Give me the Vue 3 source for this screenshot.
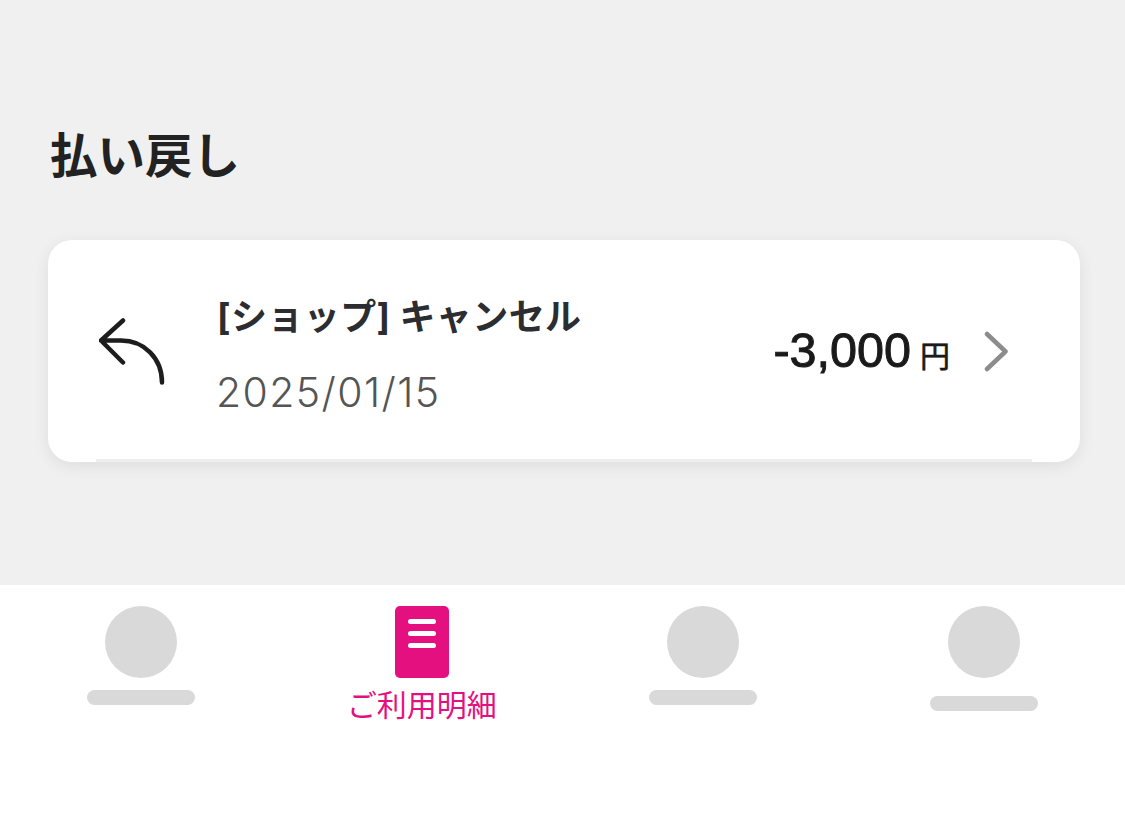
<template>
  <div class="page">
    <main class="content">
      <h1 class="heading">払い戻し</h1>
      <section class="card">
        <div class="row">
          <svg class="back-icon" width="72" height="72" viewBox="0 0 72 72" fill="none">
            <path d="M24 6.5 L2 26.5 L24 48.5 M2 26.5 H22 C45 26.5 63 44 63 68.5" stroke="#1d1d1d" stroke-width="4.5" stroke-linecap="round" stroke-linejoin="round" />
          </svg>
          <div class="info">
            <div class="title">[ショップ] キャンセル</div>
            <div class="date">2025/01/15</div>
          </div>
          <div class="amount">-3,000<span class="unit">円</span></div>
          <svg class="chevron" width="26" height="44" viewBox="0 0 26 44" fill="none">
            <path d="M5 6 L23.5 23.5 L5 41" stroke="#8c8c8c" stroke-width="4.5" stroke-linecap="round" stroke-linejoin="round" />
          </svg>
        </div>
      </section>
    </main>
    <nav class="nav">
      <div class="nav-item">
        <div class="circle"></div>
        <div class="bar"></div>
      </div>
      <div class="nav-item active">
        <div class="doc">
          <span></span>
          <span></span>
          <span></span>
        </div>
        <div class="label">ご利用明細</div>
      </div>
      <div class="nav-item">
        <div class="circle"></div>
        <div class="bar"></div>
      </div>
      <div class="nav-item">
        <div class="circle"></div>
        <div class="bar low"></div>
      </div>
    </nav>
  </div>
</template>

<script setup>
</script>

<style>
html, body {
  margin: 0;
  background: #fff;
}
</style>

<style scoped>
.page {
  width: 1125px;
  height: 822px;
  display: flex;
  flex-direction: column;
  font-family: Inter, "Noto Sans CJK JP", sans-serif;
  overflow: hidden;
}

.content {
  height: 585px;
  box-sizing: border-box;
  padding: 126px 45px 0 48px;
  background: #f0f0f0;
}

.heading {
  margin: 0 0 54px 2px;
  font-size: 47.5px;
  line-height: 60px;
  font-weight: 700;
  color: #222;
}

.card {
  height: 222px;
  box-sizing: border-box;
  padding: 0 48px;
  background: #fff;
  border-radius: 24px;
  box-shadow: 0 4px 16px rgba(0, 0, 0, 0.08);
}

.row {
  height: 100%;
  display: flex;
  align-items: center;
  border-bottom: 3px solid #eeeeee;
  box-sizing: border-box;
}

.back-icon {
  margin: 0 0 0 3px;
  flex-shrink: 0;
}

.info {
  margin-left: 46px;
  flex: 1;
  padding-top: 9px;
}

.title {
  font-size: 36px;
  letter-spacing: 0.4px;
  line-height: 48px;
  font-weight: 700;
  color: #2b2d30;
}

.date {
  margin-top: 27px;
  margin-left: -1px;
  font-size: 41px;
  letter-spacing: 1.4px;
  line-height: 48px;
  font-weight: 300;
  color: #555;
}

.amount {
  font-family: "Liberation Sans", "Noto Sans CJK JP", sans-serif;
  font-size: 48.5px;
  line-height: 56px;
  font-weight: 400;
  -webkit-text-stroke: 1px #1a1a1a;
  color: #1a1a1a;
  margin-top: 8px;
}

.unit {
  margin-left: 9px;
  font-size: 30px;
  -webkit-text-stroke: 0.6px #1a1a1a;
}

.chevron {
  margin: 0 24px 0 32px;
  flex-shrink: 0;
}

.nav {
  flex: 1;
  display: grid;
  grid-template-columns: repeat(4, 1fr);
  background: #fff;
}

.nav-item {
  display: flex;
  flex-direction: column;
  align-items: center;
  padding-top: 21px;
}

.circle {
  width: 72px;
  height: 72px;
  border-radius: 50%;
  background: #d9d9d9;
}

.bar {
  width: 108px;
  height: 15px;
  margin-top: 12px;
  border-radius: 8px;
  background: #d9d9d9;
}

.bar.low {
  margin-top: 18px;
}

.doc {
  width: 54px;
  height: 72px;
  box-sizing: border-box;
  padding-top: 13px;
  border-radius: 5px;
  background: #e5107f;
  display: flex;
  flex-direction: column;
  align-items: center;
  gap: 7px;
}

.doc span {
  width: 28px;
  height: 5px;
  border-radius: 3px;
  background: #fff;
}

.label {
  margin-top: 7px;
  font-size: 30px;
  line-height: 40px;
  color: #e5107f;
}
</style>
